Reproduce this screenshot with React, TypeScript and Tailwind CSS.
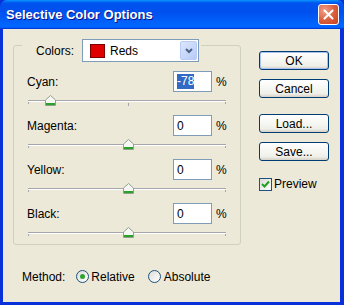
import React from "react";

const font = "font-['Liberation_Sans',Arial,sans-serif]";

const rows = [
  { name: "Cyan", value: -78, selected: true },
  { name: "Magenta", value: 0 },
  { name: "Yellow", value: 0 },
  { name: "Black", value: 0 },
];

const Thumb = () => (
  <svg width="11" height="11" viewBox="0 0 11 11">
    <path d="M5.5 0.5 L10.5 5 V10.5 H0.5 V5 Z" fill="#F6F6F3" stroke="#8FA08F" />
    <rect x="1" y="8" width="9" height="2" fill="#2BA12B" />
  </svg>
);

const Slider = ({ value, tick }: { value: number; tick?: boolean }) => (
  <div className="relative h-[18px] mx-[1px]">
    <div className="absolute left-0 right-0 top-[8px] h-[2px] border-t border-[#A7A6AA] border-b border-b-white" />
    <div className="absolute left-0 top-[10px] w-px h-[2px] bg-[#A7A6AA]" />
    <div className="absolute right-0 top-[10px] w-px h-[2px] bg-[#A7A6AA]" />
    {tick && <div className="absolute left-[100px] top-[11px] w-px h-[3px] bg-[#A7A6AA]" />}
    <div className="absolute top-[3px]" style={{ left: 100 + value - 5 }}>
      <Thumb />
    </div>
  </div>
);

const XPButton = ({ label, primary }: { label: string; primary?: boolean }) => (
  <div
    className={`h-[19px] w-[70px] rounded-[3px] border border-[#003C74] bg-[linear-gradient(to_bottom,#FFFFFF,#F0F0EA_80%,#D6D0C5)] flex items-center justify-center text-[12px] text-black ${
      primary ? "shadow-[inset_0_0_0_1px_#A9C2EF]" : ""
    }`}
  >
    {label}
  </div>
);

const Radio = ({ checked }: { checked?: boolean }) => (
  <div className="w-[13px] h-[13px] rounded-full border border-[#1C5180] bg-[linear-gradient(135deg,#DCDCD7,#FFFFFF)] flex items-center justify-center">
    {checked && <div className="w-[5px] h-[5px] rounded-full bg-[#2EA42E]" />}
  </div>
);

export default function App() {
  return (
    <div className={`w-[344px] h-[305px] bg-[#0831D9] flex flex-col ${font} text-[12px] text-black`}>
      {/* title bar */}
      <div className="h-[29px] shrink-0 rounded-t-[7px] bg-[linear-gradient(to_bottom,#0997FF_0%,#0053EE_10%,#0050EE_40%,#0066FF_88%,#0066FF_93%,#005BFF_95%,#003DD7_96%,#003DD7_100%)] flex items-center justify-between pl-[6px] pr-[5px]">
        <span className="text-white font-bold text-[13px] [text-shadow:1px_1px_#0F1089]">
          Selective Color Options
        </span>
        <div className="w-[21px] h-[21px] rounded-[3px] border border-white bg-[radial-gradient(circle_at_30%_30%,#F0A08A,#DA5B3B_55%,#C8401F)] flex items-center justify-center">
          <svg width="11" height="11" viewBox="0 0 11 11">
            <path d="M1.5 1.5 L9.5 9.5 M9.5 1.5 L1.5 9.5" stroke="white" strokeWidth="2" strokeLinecap="round" />
          </svg>
        </div>
      </div>

      {/* body */}
      <div className="flex-1 ml-[3px] mr-[4px] mb-[3px] bg-[#ECE9D8] flex pt-[16px] pl-[10px]">
        {/* left column */}
        <div className="w-[228px] flex flex-col">
          <div className="border border-[#D0D0BF] rounded-[3px] px-[13px] pb-[2px]">
            <div className="-mt-[7px] -ml-[5px] w-fit flex items-center bg-[#ECE9D8] pl-[14px] pr-[2px]">
              <span>Colors:</span>
              <div className="ml-[8px] w-[117px] h-[23px] border border-[#7F9DB9] bg-white flex items-center pl-[7px] pr-[1px]">
                <div className="w-[15px] h-[14px] bg-[#E00000] border border-[#7A0000]" />
                <span className="ml-[5px] flex-1">Reds</span>
                <div className="w-[17px] h-[19px] rounded-[2px] border border-[#B9CCF8] bg-[linear-gradient(135deg,#DCE6FD,#B6CBF8)] flex items-center justify-center">
                  <svg width="8" height="6" viewBox="0 0 8 6">
                    <path d="M1 1 L4 4 L7 1" stroke="#4D6185" strokeWidth="2" fill="none" />
                  </svg>
                </div>
              </div>
            </div>
            <div className="mt-[9px] flex flex-col">
              {rows.map((r) => (
                <div key={r.name} className="mb-[5px] last:mb-0">
                  <div className="h-[21px] flex items-center justify-between">
                    <span>{r.name}:</span>
                    <div className="flex items-center">
                      <div className="w-[39px] h-[21px] border border-[#7F9DB9] bg-white flex items-center pl-[3px]">
                        {r.selected ? (
                          <span className="bg-[#316AC5] text-white leading-[15px]">{r.value}</span>
                        ) : (
                          <span>{r.value}</span>
                        )}
                      </div>
                      <span className="ml-[4px] w-[11px]">%</span>
                    </div>
                  </div>
                  <Slider value={r.value} tick={r.name === "Cyan"} />
                </div>
              ))}
            </div>
          </div>

          <div className="mt-[24px] ml-[9px] flex items-center h-[15px]">
            <span>Method:</span>
            <div className="ml-[11px] flex items-center">
              <Radio checked />
              <span className="ml-[2px]">Relative</span>
            </div>
            <div className="ml-[13px] flex items-center">
              <Radio />
              <span className="ml-[3px]">Absolute</span>
            </div>
          </div>
        </div>

        {/* right column */}
        <div className="ml-[18px] flex flex-col pt-[6px]">
          <XPButton label="OK" primary />
          <div className="mt-[9px]">
            <XPButton label="Cancel" />
          </div>
          <div className="mt-[16px]">
            <XPButton label="Load..." />
          </div>
          <div className="mt-[9px]">
            <XPButton label="Save..." />
          </div>
          <div className="mt-[14px] flex items-center">
            <div className="w-[13px] h-[13px] border border-[#1C5180] bg-[linear-gradient(135deg,#DCDCD7,#FFFFFF)] flex items-center justify-center">
              <svg width="9" height="8" viewBox="0 0 9 8">
                <path d="M1 4 L3.5 6.5 L8 1.5" stroke="#21A121" strokeWidth="2" fill="none" />
              </svg>
            </div>
            <span className="ml-[2px]">Preview</span>
          </div>
        </div>
      </div>
    </div>
  );
}
